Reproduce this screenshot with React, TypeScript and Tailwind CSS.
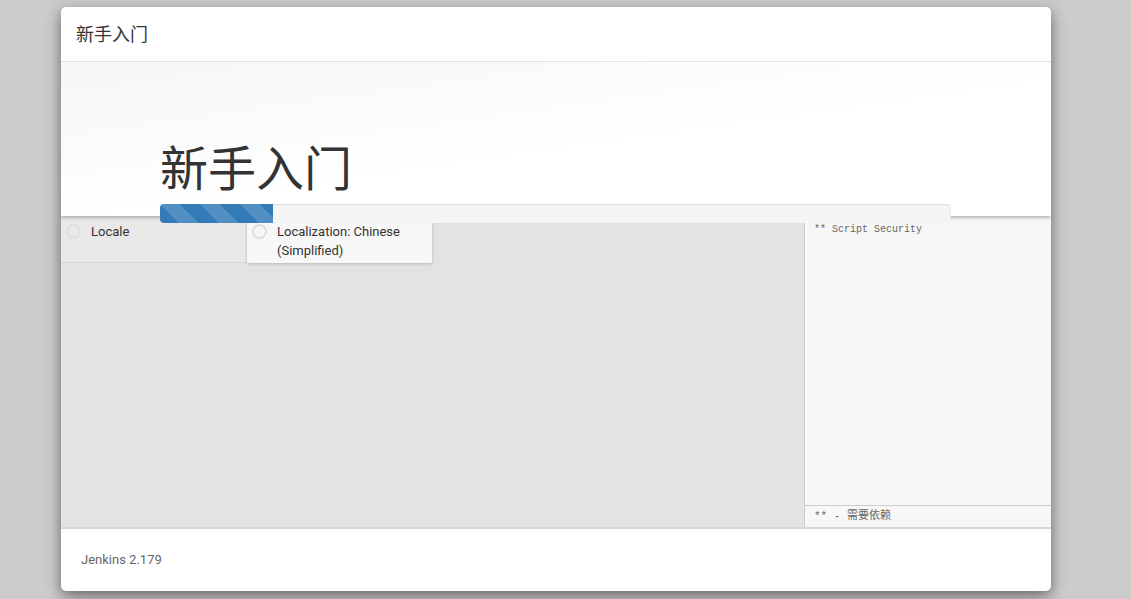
import React from "react";

const stripes =
  "bg-[linear-gradient(45deg,rgba(255,255,255,.15)_25%,transparent_25%,transparent_50%,rgba(255,255,255,.15)_50%,rgba(255,255,255,.15)_75%,transparent_75%,transparent)] bg-[length:40px_40px]";

type TileProps = {
  label: React.ReactNode;
  selected?: boolean;
};

const PluginTile = ({ label, selected }: TileProps) => {
  return (
    <div
      className={
        "relative w-[185px] h-[47px] pl-[30px] pr-2 pt-[6px] text-[13px] leading-[19px] text-[#333] " +
        (selected
          ? "bg-[#f7f7f7] shadow-[0_1px_3px_rgba(0,0,0,0.2)]"
          : "bg-[#e9e9e9] border-b border-[#d3d3d3]")
      }
    >
      <span className="absolute left-[5px] top-[8px] w-[15px] h-[15px] rounded-full border-2 border-[#dedede]" />
      {label}
    </div>
  );
};

export default function App() {
  return (
    <div
      className="min-h-screen h-[599px] bg-[#cccccc] pl-[61px] pt-[7px]"
      style={{ fontFamily: 'Roboto, "Noto Sans CJK SC", sans-serif' }}
    >
      <div className="w-[990px] h-[584px] bg-white rounded-[5px] shadow-[0_5px_15px_rgba(0,0,0,0.5)] flex flex-col overflow-hidden">
        {/* header */}
        <div className="h-[55px] shrink-0 border-b border-[#e5e5e5] px-[15px] flex items-center text-[18px] text-[#333]">
          新手入门
        </div>

        {/* hero */}
        <div className="relative z-10 h-[154px] shrink-0 bg-[linear-gradient(172deg,#f6f6f6_0%,#ffffff_55%)] shadow-[0_2px_3px_rgba(0,0,0,0.25)] px-[99px] flex flex-col justify-end">
          <h1 className="text-[48px] leading-[52px] text-[#333] font-normal mb-[8px]">
            新手入门
          </h1>
          <div className="w-[791px] h-[19px] mb-[-7px] rounded-[4px] bg-[#f5f5f5] shadow-[inset_0_1px_2px_rgba(0,0,0,0.1)] overflow-hidden">
            <div className={"h-full w-[113px] bg-[#337ab7] " + stripes} />
          </div>
        </div>

        {/* plugin list */}
        <div className="flex h-[313px] shrink-0 bg-[#e3e3e3] border-b-2 border-[#d6d6d6]">
          <div className="flex-1 flex items-start">
            <PluginTile label="Locale" />
            <div className="w-px" />
            <PluginTile label={<>Localization: Chinese<br />(Simplified)</>} selected />
          </div>
          <div
            className="w-[247px] bg-[#f7f7f7] border-l border-[#cccccc] flex flex-col text-[#666]"
            style={{ fontFamily: '"Liberation Mono", "Noto Sans CJK SC", monospace' }}
          >
            <div className="flex-1 px-[9px] pt-[6px] text-[10px]">** Script Security</div>
            <div className="h-[22px] border-t border-[#cccccc] px-[9px] flex items-center text-[11px]">
              ** - 需要依赖
            </div>
          </div>
        </div>

        {/* footer */}
        <div className="flex-1 flex items-center px-[20px] text-[13px] text-[#666]">
          Jenkins 2.179
        </div>
      </div>
    </div>
  );
}
